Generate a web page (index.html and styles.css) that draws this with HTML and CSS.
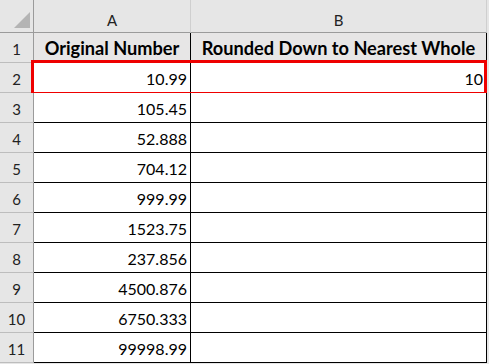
FILE: index.html
```html
<!DOCTYPE html>
<html>
<head>
<meta charset="utf-8">
<link rel="stylesheet" href="styles.css">
</head>
<body>
<div class="sheet">
  <div class="row head">
    <div class="rh corner"><span class="tri"></span></div>
    <div class="ca ch">A</div>
    <div class="cb ch">B</div>
  </div>
  <div class="row">
    <div class="rh">1</div>
    <div class="ca title">Original Number</div>
    <div class="cb title">Rounded Down to Nearest Whole</div>
  </div>
  <div class="row sel">
    <div class="rh">2</div>
    <div class="ca num">10.99</div>
    <div class="cb num">10</div>
  </div>
  <div class="row"><div class="rh">3</div><div class="ca num">105.45</div><div class="cb num"></div></div>
  <div class="row"><div class="rh">4</div><div class="ca num">52.888</div><div class="cb num"></div></div>
  <div class="row"><div class="rh">5</div><div class="ca num">704.12</div><div class="cb num"></div></div>
  <div class="row"><div class="rh">6</div><div class="ca num">999.99</div><div class="cb num"></div></div>
  <div class="row"><div class="rh">7</div><div class="ca num">1523.75</div><div class="cb num"></div></div>
  <div class="row"><div class="rh">8</div><div class="ca num">237.856</div><div class="cb num"></div></div>
  <div class="row"><div class="rh">9</div><div class="ca num">4500.876</div><div class="cb num"></div></div>
  <div class="row"><div class="rh">10</div><div class="ca num">6750.333</div><div class="cb num"></div></div>
  <div class="row"><div class="rh">11</div><div class="ca num">99998.99</div><div class="cb num"></div></div>
</div>
</body>
</html>
```
FILE: styles.css
```css
html, body {
  margin: 0;
  padding: 0;
  background: #e6e6e6;
  width: 489px;
  height: 364px;
  overflow: hidden;
}
.sheet {
  display: flex;
  flex-direction: column;
  font-family: Lato, "Liberation Sans", sans-serif;
  font-size: 16px;
  color: #000;
}
.row {
  display: flex;
  height: 30px;
  box-sizing: border-box;
  position: relative;
}
.row.head {
  height: 33px;
}
.rh {
  width: 34px;
  box-sizing: border-box;
  background: #e6e6e6;
  border-right: 1px solid #9b9b9b;
  border-bottom: 1px solid #bdbdbd;
  display: flex;
  align-items: flex-end;
  justify-content: center;
  padding-bottom: 4px;
  color: #222;
  font-size: 15px;
}
.head .rh {
  border-bottom-color: #9b9b9b;
}
.corner {
  position: relative;
}
.tri {
  position: absolute;
  right: 3px;
  bottom: 4px;
  width: 0;
  height: 0;
  border-left: 16px solid transparent;
  border-bottom: 16px solid #b4b4b4;
}
.ca, .cb {
  box-sizing: border-box;
  border-right: 1px solid #000;
  border-bottom: 1px solid #000;
  display: flex;
  align-items: flex-end;
  padding: 0 3px 4px 3px;
  background: #fff;
}
.ca { width: 157px; }
.cb { width: 296px; }
.head .ca, .head .cb {
  background: #e6e6e6;
  border-right: 1px solid #cfcfcf;
  border-bottom: 1px solid #9b9b9b;
  justify-content: center;
  padding-bottom: 3px;
  color: #222;
  font-size: 15px;
}
.title {
  background: #e7e6e6 !important;
  font-weight: 700;
  font-size: 18.2px;
  justify-content: center;
  padding-bottom: 3px;
  padding-left: 0;
  padding-right: 0;
  white-space: nowrap;
}
.num {
  justify-content: flex-end;
}
.sel::after {
  content: "";
  position: absolute;
  left: 31px;
  top: -3px;
  width: 456px;
  height: 35px;
  box-sizing: border-box;
  border: 3px solid #ee0000;
  pointer-events: none;
}
```
